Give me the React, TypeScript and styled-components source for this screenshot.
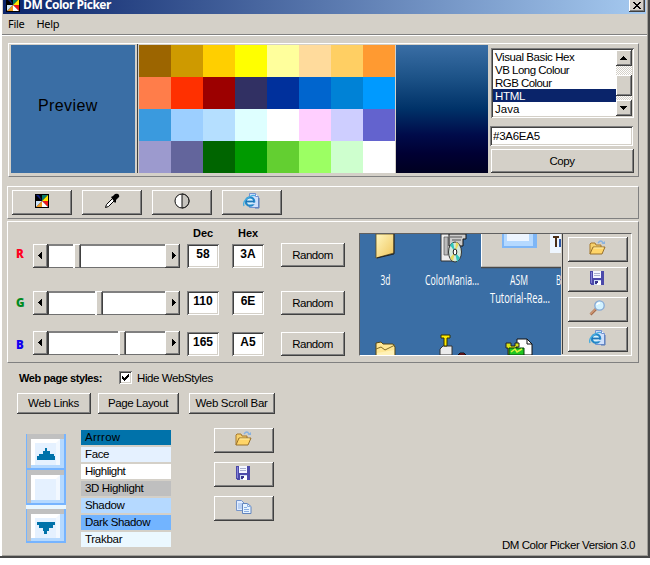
import React from "react";
import styled, { createGlobalStyle, css } from "styled-components";

const FACE = "#d4d0c8";

const GlobalStyle = createGlobalStyle`
  * { box-sizing: border-box; }
  body {
    margin: 0;
    background: #fff;
    font-family: "Liberation Sans", Arial, sans-serif;
    font-size: 11.5px;
    line-height: 13px;
    color: #000;
    overflow: hidden;
  }
`;

const raised = css`
  background: ${FACE};
  box-shadow: inset -1px -1px #404040, inset 1px 1px #fff, inset -2px -2px #808080;
`;

const sunken = css`
  background: #fff;
  box-shadow: inset 1px 1px #808080, inset -1px -1px #fff, inset 2px 2px #404040,
    inset -2px -2px ${FACE};
`;

const Window = styled.div`
  width: 650px;
  height: 558px;
  padding: 0 4px 0 3px;
  background: ${FACE};
  box-shadow: inset -2px -2px #484848, inset 2px 0 #fff, inset 1px 0 #d4d0c8, inset -3px -3px #a09e98;
`;

const TitleBar = styled.header`
  display: flex;
  height: 14px;
  padding: 0 1px 0 3px;
  background: linear-gradient(to right, #0a246a, #a6caf0);
  color: #fff;
`;

const TitleIcon = styled.span`
  display: block;
  height: 14px;
  margin: -2px 3px 0 0;
`;

const Title = styled.span`
  flex: 1;
  height: 14px;
  font: bold 12px/12px "Open Sans", "Noto Sans", sans-serif;
  letter-spacing: -0.5px;
  margin-top: -1px;
`;

const CloseButton = styled.button`
  ${raised}
  width: 16px;
  height: 14px;
  margin-top: -2px;
  border: 0;
  padding: 0;
  display: flex;
  align-items: center;
  justify-content: center;
`;

const MenuBar = styled.nav`
  display: flex;
  gap: 12px;
  height: 20px;
  padding: 2px 5px;
  font: 11px/15px "Noto Sans", sans-serif;
  letter-spacing: -0.3px;
`;

const Separator = styled.div`
  height: 2px;
  margin: 0 -1px;
  border-top: 1px solid #808080;
  border-bottom: 1px solid #fff;
`;

const Frame = styled.section<{ $h: number; $top: number; $left: number }>`
  display: flex;
  height: ${(p) => p.$h}px;
  margin: ${(p) => p.$top}px 7px 0 ${(p) => p.$left}px;
  border: 1px solid;
  border-color: #fff #808080 #808080 #fff;
`;

const Preview = styled.div`
  width: 124px;
  height: 128px;
  margin: 1px 2px 0;
  padding-left: 27px;
  background: #3a6ea5;
  font-size: 16px;
  line-height: 121px;
  letter-spacing: 0.4px;
`;

const Palette = styled.div`
  display: grid;
  grid-template-columns: repeat(8, 32px);
  grid-auto-rows: 32px;
  height: 129px;
  padding-top: 1px;
  padding-left: 1px;
  border-left: 1px solid #404040;
`;

const Swatch = styled.i<{ $c: string }>`
  background: ${(p) => p.$c};
`;

const Shades = styled.div`
  width: 92px;
  height: 128px;
  margin: 1px 2px 0 1px;
  background: linear-gradient(#3a6ea5 0%, #1d5388 25%, #003268 50%, #000b4a 70%, #000033 85%, #000020 100%);
`;

const Formats = styled.div`
  display: flex;
  flex-direction: column;
  width: 144px;
  padding-top: 4px;
`;

const ListBox = styled.div`
  ${sunken}
  display: flex;
  width: 143px;
  height: 70px;
  margin-left: 1px;
  padding: 2px;
`;

const Options = styled.ul`
  flex: 1;
  margin: 0;
  padding: 0;
  list-style: none;
`;

const Option = styled.li<{ $on?: boolean; $sp?: number }>`
  height: 13px;
  padding-left: 2px;
  line-height: 14px;
  white-space: nowrap;
  letter-spacing: ${(p) => p.$sp ?? 0}px;
  ${(p) => p.$on && "background: #0a246a; color: #fff;"}
`;

const VScroll = styled.div`
  width: 16px;
  height: 66px;
  background: repeating-conic-gradient(#fff 0 25%, #d4d0c8 0 50%) 0 0 / 2px 2px;
`;

const ScrollPart = styled.div<{ $h: number; $gap?: number }>`
  ${raised}
  display: flex;
  align-items: center;
  justify-content: center;
  height: ${(p) => p.$h}px;
  margin-top: ${(p) => p.$gap ?? 0}px;
`;

const CodeField = styled.input`
  ${sunken}
  width: 143px;
  height: 20px;
  margin-top: 8px;
  border: 0;
  padding: 0 3px;
  font: 11.5px "Liberation Sans", sans-serif;
  letter-spacing: -0.25px;
  outline: 0;
`;

const Button = styled.button<{ $w: number; $h?: number; $sp?: number }>`
  ${raised}
  display: flex;
  flex: none;
  align-items: center;
  justify-content: center;
  width: ${(p) => p.$w}px;
  height: ${(p) => p.$h ?? 25}px;
  border: 0;
  padding: 0 1px 0 0;
  font: 11.5px/13px "Liberation Sans", sans-serif;
  letter-spacing: ${(p) => p.$sp ?? -0.4}px;
  white-space: nowrap;
  color: #000;
`;

const CopyButton = styled(Button)`
  margin: 3px 0 0 1px;
`;

const IconButton = styled(Button)`
  padding-bottom: 3px;
`;

const ToolRow = styled.div`
  display: flex;
  gap: 10px;
  padding: 3px 4px;
`;

const Channels = styled.div`
  width: 351px;
  padding-top: 5px;
`;

const channelGrid = css`
  display: grid;
  grid-template-columns: 17px 154px 45px 49px 64px;
  padding-left: 8px;
`;

const Heads = styled.div`
  ${channelGrid}
  height: 16px;
  font-weight: bold;
  font-size: 11px;
  & > span { padding-left: 6px; }
`;

const ChannelRow = styled.div<{ $gap: number }>`
  ${channelGrid}
  height: 24px;
  margin-top: ${(p) => p.$gap}px;
`;

const ChannelName = styled.b<{ $c: string; $lh: number }>`
  height: 24px;
  color: ${(p) => p.$c};
  font: 800 11.5px/${(p) => p.$lh}px "Open Sans", sans-serif;
`;

const Slider = styled.div<{ $up: number }>`
  display: flex;
  width: 147px;
  height: 24px;
  margin-top: -${(p) => p.$up}px;
`;

const RandomButton = styled(Button)<{ $up: number }>`
  margin-top: -${(p) => p.$up}px;
`;

const SliderEnd = styled.div`
  ${raised}
  display: flex;
  align-items: center;
  justify-content: center;
  width: 15px;
`;

const Track = styled.div<{ $w: number }>`
  width: ${(p) => p.$w}px;
  background: #fff;
  border-top: 2px solid #808080;
  border-bottom: 1px solid #707070;
  border-left: 1px solid #404040;
`;

const Thumb = styled.div`
  width: 7px;
  background: ${FACE};
  box-shadow: inset 2px 1px #fff, inset -1px -1px #707070;
`;

const ValueBox = styled.div`
  ${sunken}
  width: 32px;
  height: 24px;
  text-align: center;
  font-weight: bold;
  font-size: 12px;
  line-height: 20px;
`;

const Capture = styled.div`
  display: flex;
  width: 273px;
  height: 123px;
  margin-top: 11px;
  border: 1px solid;
  border-color: #606060 #fff #fff #606060;
`;

const CaptureTools = styled.div`
  display: flex;
  flex-direction: column;
  gap: 5px;
  margin-left: 1px;
  padding: 3px 0 0 5px;
  height: 120px;
  border-left: 1px solid #404040;
`;

const StyleLine = styled.div`
  display: flex;
  align-items: center;
  height: 14px;
  margin: 8px 0 0 16px;
`;

const StyleTitle = styled.b`
  width: 100px;
  font-size: 11px;
  letter-spacing: -0.42px;
  white-space: nowrap;
`;

const CheckBox = styled.span`
  ${sunken}
  display: flex;
  align-items: center;
  justify-content: center;
  width: 13px;
  height: 13px;
  margin: -1px 5px 0 0;
`;

const CheckLabel = styled.span`
  letter-spacing: -0.42px;
`;

const StyleButtons = styled.div`
  display: flex;
  margin: 8px 0 0 14px;
  & > :nth-child(2) { margin: 0 10px 0 7px; }
`;

const Lower = styled.div`
  display: flex;
  height: 121px;
  padding-left: 23px;
  margin-top: 14px;
`;

const DemoScroll = styled.div`
  width: 40px;
  height: 109px;
  margin-top: 6px;
  background: #e8f6ff;
`;

const DemoPart = styled.div<{ $h: number; $gap?: number }>`
  height: ${(p) => p.$h}px;
  margin-top: ${(p) => p.$gap ?? 0}px;
  border: solid #76b4ff;
  border-width: 0 2px 2px 1px;
  padding: 5px 4px 3px;
  background: linear-gradient(#c0c0c0, #c0c0c0) 0 0 / 100% 5px no-repeat,
    linear-gradient(to right, #c0c0c0 4px, #b5d9ff 4px);
`;

const DemoFace = styled.div`
  display: flex;
  align-items: center;
  justify-content: center;
  height: 100%;
  background: #e5f1ff;
  border: 4px solid #fff;
  border-right-color: #f2f8ff;
  border-bottom-width: 0;
`;

const StyleList = styled.div`
  display: flex;
  flex-direction: column;
  gap: 2px;
  width: 90px;
  margin: 2px 43px 0 15px;
`;

const StyleItem = styled.div<{ $c: string; $sp?: number }>`
  height: 15px;
  padding-left: 4px;
  background: ${(p) => p.$c};
  line-height: 15px;
  letter-spacing: ${(p) => p.$sp ?? -0.36}px;
`;

const FileTools = styled.div`
  display: flex;
  flex-direction: column;
  gap: 9px;
`;

const Version = styled.footer`
  margin: -10px 11px 0 0;
  text-align: right;
  letter-spacing: -0.42px;
`;

const Mark = styled.svg`
  display: block;
`;

const Pinwheel = () => (
  <Mark width="14" height="14" viewBox="0 0 14 14">
    <rect width="14" height="14" fill="#000" />
    <path d="M1 1h6v6z" fill="#0a1c80" />
    <path d="M7 1h6L7 7z" fill="#087a68" />
    <path d="M13 1v6H7z" fill="#ffe600" />
    <path d="M13 7v6L7 7z" fill="#f01818" />
    <path d="M7 7l6 6H7z" fill="#fff" />
    <path d="M7 7v6H1z" fill="#f09a20" />
    <path d="M1 7h6l-6 6z" fill="#cde4f7" />
    <path d="M7 1v6l-3-6z" fill="#000" />
  </Mark>
);

const Dropper = () => (
  <svg width="16" height="16" viewBox="0 0 16 16">
    <path d="M1.500 14.500l1-3 6-6 2 2-6 6z" fill="#fff" stroke="#000" />
    <path d="M7 4l2-1 2-2q3-1 4 1t-1 3l-2 2v2l-1 1z" fill="#000" />
  </svg>
);

const Contrast = () => (
  <svg width="16" height="16" viewBox="0 0 16 16">
    <circle cx="8" cy="8" r="7" fill="#fff" stroke="#111" />
    <path d="M8 1a7 7 0 0 1 0 14z" fill="#c6c4be" stroke="#111" />
  </svg>
);

const WebPage = () => (
  <svg width="17" height="16" viewBox="0 0 17 16">
    <path d="M6.500 .5h6l3 3v11h-9z" fill="#cfe0fb" stroke="#7392cf" />
    <path d="M12.500 .5v3h3" fill="#fff" stroke="#7392cf" />
    <path d="M12 15h4V5" fill="none" stroke="#5578b8" />
    <circle cx="7" cy="8.500" r="4.200" fill="#d9f2fc" stroke="#2487c7" strokeWidth="2.200" />
    <path d="M3 8.500h8" stroke="#1d75b8" strokeWidth="1.800" />
    <path d="M8.500 10.500h3.500" stroke="#cfe0fb" strokeWidth="1.600" />
    <path d="M1 13Q-1 8 7 3.500 11 1.500 12 3" fill="none" stroke="#48aee0" strokeWidth="1.300" />
  </svg>
);

const Folder = () => (
  <svg width="17" height="16" viewBox="0 0 17 16">
    <path d="M1 14V4l1-1h4l1 2h5v3" fill="#f6d16c" stroke="#a7782b" />
    <path d="M1 14l3-7h12l-3 7z" fill="#ffd568" stroke="#98702c" />
    <path d="M4.700 8h9.800" stroke="#fff0aa" />
    <path d="M9 3q3-4 5 0" fill="none" stroke="#87b2e1" strokeWidth="1.300" />
    <path d="M12.500 4H16V1z" fill="#87b2e1" />
  </svg>
);

const Disk = () => (
  <svg width="15" height="14" viewBox="0 0 15 14" shapeRendering="crispEdges">
    <path d="M0 0h14v14H1l-1-1z" fill="#4b49aa" />
    <path d="M1 1h1v11H1z" fill="#8583d6" />
    <path d="M3 0h8v7H3z" fill="#f4f6ff" />
    <path d="M4 2h6v1H4zM4 4h6v1H4z" fill="#a9b0ce" />
    <path d="M4 9h7v5H4z" fill="#cfdef5" />
    <path d="M5 10h3v3H5z" fill="#37358c" />
    <path d="M8 10h3v4H7z" fill="#fff" />
  </svg>
);

const Magnifier = () => (
  <svg width="17" height="16" viewBox="0 0 17 16">
    <path d="M1.500 14.500L7 9" stroke="#a66c4c" strokeWidth="2.600" />
    <path d="M1.500 14L6.500 9" stroke="#edb68e" />
    <circle cx="10.500" cy="5.500" r="4.700" fill="#d2f2ff" stroke="#86a9d4" strokeWidth="1.300" />
    <path d="M8 5q0-2 3-2" stroke="#fff" fill="none" strokeWidth="1.500" />
  </svg>
);

const Pages = () => (
  <svg width="16" height="14" viewBox="0 0 16 14">
    <path d="M.5.5h5l3 3v7h-8z" fill="#e0ecff" stroke="#7595cb" />
    <path d="M2 4h4M2 6h4M2 8h4" stroke="#93b5e7" />
    <path d="M6.500 3.500h5l3.500 3v7H6.500z" fill="#e6f4ff" stroke="#6284bd" />
    <path d="M11.500 3.500v3H15M8 7.500h3M8 9.500h5M8 11.500h5" stroke="#8aade2" fill="none" />
  </svg>
);

const Triangle = ({ d }: { d: string }) => (
  <svg width="8" height="8" viewBox="0 0 8 8" shapeRendering="crispEdges">
    <path d={d} fill="#000" />
  </svg>
);

const UP = "M3 2h1v1h1v1h1v1h1v1H0V5h1V4h1V3h1z";
const DOWN = "M0 2h7v1H6v1H5v1H4v1H3V5H2V4H1V3H0z";
const LEFT = "M5 0v7H4V6H3V5H2V4H1V3h1V2h1V1h1V0z";
const RIGHT = "M3 0v7h1V6h1V5h1V4h1V3H6V2H5V1H4V0z";

const DemoArrow = ({ down }: { down?: boolean }) => (
  <svg width="18" height="12" viewBox="0 0 18 12" shapeRendering="crispEdges">
    <path
      fill="#0072aa"
      d={down ? "M0 0h18v3h-2v3h-4v3h-2v3H7V9H6V6H2V3H0z" : "M8 0h2v3h3v3h4v2h1v4H0V8h2V6h4V3h2z"}
    />
  </svg>
);

const DesktopThumb = () => (
  <svg width="201" height="121" viewBox="0 0 201 121">
    <defs>
      <linearGradient id="fold" x1="0" x2="1" y1="0" y2="1">
        <stop offset="0" stopColor="#fff7c0" />
        <stop offset="1" stopColor="#efc45a" />
      </linearGradient>
    </defs>
    <rect width="201" height="121" fill="#3a6ea5" />
    <path d="M16 0h18v19L16 24z" fill="url(#fold)" stroke="#5d4b17" strokeWidth=".8" />
    <path d="M34 0v20l-17 4" fill="none" stroke="#222" />
    <path d="M81 0h12v27H81z" fill="#eee" stroke="#333" />
    <path d="M84 3h4v18h-4z" fill="#bbb" stroke="#555" strokeWidth=".7" />
    <path d="M89 0h17v5h-3v7H89z" fill="#ccc" stroke="#111" />
    <path d="M90 3h12M92 6h9" stroke="#555" />
    <ellipse cx="95" cy="18" rx="6.500" ry="10" fill="#d5e8dc" stroke="#333" />
    <path d="M95 18l-5-7 3-3zM95 18l5 6-3 4z" fill="#2fc6bd" />
    <path d="M95 18l1-10 3 2zM95 18l-2 9-3-3z" fill="#e6da5b" />
    <ellipse cx="95" cy="18" rx="1.800" ry="3" fill="#fff" stroke="#222" />
    <path d="M121 0h80v34h-80z" fill={FACE} />
    <path d="M121.500 33V0" stroke="#fff" />
    <path d="M121 33.500h80" stroke="#494949" strokeWidth="1.500" />
    <path d="M142 0h35v14h-35z" fill="#7eb6f6" />
    <path d="M144 0h29v12h-29z" fill="#b5d9ff" />
    <path d="M147 0h22v7h-22z" fill="#edf5ff" />
    <path d="M190 0h11v19h-11z" fill="#eef6ff" />
    <path d="M193 3h6M196 3v10" stroke="#4a2d16" strokeWidth="2" />
    <path d="M200 5v8" stroke="#2e57a5" strokeWidth="2" />
    <path d="M16 121v-12l5-1 2 2h10l2 3v8" fill="#ffe795" stroke="#544719" />
    <path d="M16 115l5-2 4 3 10-5" fill="none" stroke="#806b25" />
    <path d="M17 119l17-3v5H17z" fill="#fff1b6" />
    <path d="M80 121v-6l3-3h9v9z" fill="#ececec" stroke="#333" />
    <path d="M81 101h9v3h-3v8h-3v-8h-3z" fill="#ffed00" stroke="#353000" />
    <path d="M98 121l2-2h4l2 2z" fill="#a01422" stroke="#111" />
    <path d="M157 105h10l5 5v11h-15z" fill="#fff" stroke="#111" />
    <path d="M167 105v5h5" fill="none" stroke="#111" />
    <path d="M146 109h5v3h4v-3h4v4h-3v8h-8v-7h-2z" fill="#d9e516" stroke="#222" />
    <path d="M149 114h15v7h-15z" fill="#1fc521" stroke="#083808" />
    <path d="M151 118l4-3 2 3 5-3" fill="none" stroke="#d8f43c" strokeWidth="1.500" />
    <g fill="#fff" fontFamily="Open Sans, sans-serif" fontSize="14">
      <text x="20.500" y="50.500" textLength="10" lengthAdjust="spacingAndGlyphs">3d</text>
      <text x="65" y="50.500" textLength="54" lengthAdjust="spacingAndGlyphs">ColorMania...</text>
      <text x="150" y="50.500" textLength="18" lengthAdjust="spacingAndGlyphs">ASM</text>
      <text x="196" y="50.500" textLength="5" lengthAdjust="spacingAndGlyphs">B</text>
      <text x="130" y="69" textLength="60" lengthAdjust="spacingAndGlyphs">Tutorial-Rea...</text>
    </g>
  </svg>
);

const COLORS = [
  "#9c6500", "#ce9a00", "#ffcf00", "#ffff00", "#ffff9c", "#ffdb9c", "#ffcf63", "#ff9a31",
  "#ff7d4a", "#ff3000", "#9c0000", "#313063", "#00309c", "#0065ce", "#0082d6", "#009aff",
  "#3a9ade", "#9ccfff", "#b5dfff", "#deffff", "#ffffff", "#ffcfff", "#ceceff", "#6363ce",
  "#9c9ace", "#63659c", "#006500", "#009a00", "#63cf31", "#9cff63", "#ceffce", "#ffffff",
];

const CHANNELS = [
  { name: "R", color: "#ff0020", dec: "58", hex: "3A", pos: 25, gap: 1, line: 20, sliderUp: 0, buttonUp: 1 },
  { name: "G", color: "#008a20", dec: "110", hex: "6E", pos: 47, gap: 23, line: 24, sliderUp: 0, buttonUp: 0 },
  { name: "B", color: "#1000f0", dec: "165", hex: "A5", pos: 70, gap: 17, line: 26, sliderUp: 1, buttonUp: 0 },
];

export default function App() {
  return (
    <>
      <GlobalStyle />
      <Window>
        <TitleBar>
          <TitleIcon><Pinwheel /></TitleIcon>
          <Title>DM Color Picker</Title>
          <CloseButton aria-label="Close">
            <svg width="8" height="7" viewBox="0 0 8 7" shapeRendering="crispEdges">
              <path d="M0 0h2v1h1v1h2V1h1V0h2v1H7v1H6v1H5v1h1v1h1v1h1v1H6V6H5V5H3v1H2v1H0V6h1V5h1V4h1V3H2V2H1V1H0z" />
            </svg>
          </CloseButton>
        </TitleBar>
        <MenuBar>
          <span>File</span>
          <span>Help</span>
        </MenuBar>
        <Separator />

        <Frame $h={134} $top={7} $left={5}>
          <Preview>Preview</Preview>
          <Palette>
            {COLORS.map((c, i) => <Swatch key={i} $c={c} />)}
          </Palette>
          <Shades />
          <Formats>
            <ListBox>
              <Options>
                <Option $sp={-0.42}>Visual Basic Hex</Option>
                <Option $sp={-0.5}>VB Long Colour</Option>
                <Option $sp={-0.55}>RGB Colour</Option>
                <Option $sp={-0.3} $on>HTML</Option>
                <Option>Java</Option>
              </Options>
              <VScroll>
                <ScrollPart $h={16}><Triangle d={UP} /></ScrollPart>
                <ScrollPart $h={21} $gap={9} />
                <ScrollPart $h={16} $gap={4}><Triangle d={DOWN} /></ScrollPart>
              </VScroll>
            </ListBox>
            <CodeField defaultValue="#3A6EA5" />
            <CopyButton $w={143} $h={24}>Copy</CopyButton>
          </Formats>
        </Frame>

        <Frame $h={33} $top={9} $left={4}>
          <ToolRow>
            <IconButton $w={60}><Pinwheel /></IconButton>
            <IconButton $w={60}><Dropper /></IconButton>
            <IconButton $w={60}><Contrast /></IconButton>
            <IconButton $w={60}><WebPage /></IconButton>
          </ToolRow>
        </Frame>

        <Frame $h={142} $top={2} $left={4}>
          <Channels>
            <Heads>
              <i /><i />
              <span>Dec</span>
              <span>Hex</span>
            </Heads>
            {CHANNELS.map((c) => (
              <ChannelRow key={c.name} $gap={c.gap}>
                <ChannelName $c={c.color} $lh={c.line}>{c.name}</ChannelName>
                <Slider $up={c.sliderUp}>
                  <SliderEnd><Triangle d={LEFT} /></SliderEnd>
                  <Track $w={c.pos} />
                  <Thumb />
                  <Track $w={110 - c.pos} />
                  <SliderEnd><Triangle d={RIGHT} /></SliderEnd>
                </Slider>
                <ValueBox>{c.dec}</ValueBox>
                <ValueBox>{c.hex}</ValueBox>
                <RandomButton $w={64} $h={24} $sp={-0.5} $up={c.buttonUp}>Random</RandomButton>
              </ChannelRow>
            ))}
          </Channels>
          <Capture>
            <DesktopThumb />
            <CaptureTools>
              <IconButton $w={60}><Folder /></IconButton>
              <IconButton $w={60}><Disk /></IconButton>
              <IconButton $w={60}><Magnifier /></IconButton>
              <IconButton $w={60}><WebPage /></IconButton>
            </CaptureTools>
          </Capture>
        </Frame>

        <StyleLine>
          <StyleTitle>Web page styles:</StyleTitle>
          <CheckBox>
            <svg width="7" height="7" viewBox="0 0 7 7" shapeRendering="crispEdges">
              <path d="M0 2h1v1h1v1h1V3h1V2h1V1h1V0h1v3H6v1H5v1H4v1H3v1H2V6H1V5H0z" />
            </svg>
          </CheckBox>
          <CheckLabel>Hide WebStyles</CheckLabel>
        </StyleLine>
        <StyleButtons>
          <Button $w={74} $h={21} $sp={-0.28}>Web Links</Button>
          <Button $w={81} $h={21}>Page Layout</Button>
          <Button $w={86} $h={21} $sp={-0.32}>Web Scroll Bar</Button>
        </StyleButtons>

        <Lower>
          <DemoScroll>
            <DemoPart $h={36}><DemoFace><DemoArrow /></DemoFace></DemoPart>
            <DemoPart $h={35}><DemoFace /></DemoPart>
            <DemoPart $h={34} $gap={4}><DemoFace><DemoArrow down /></DemoFace></DemoPart>
          </DemoScroll>
          <StyleList>
            <StyleItem $c="#0072aa" $sp={0.25}>Arrrow</StyleItem>
            <StyleItem $c="#e5f1ff">Face</StyleItem>
            <StyleItem $c="#ffffff" $sp={-0.5}>Highlight</StyleItem>
            <StyleItem $c="#bfbfbf">3D Highlight</StyleItem>
            <StyleItem $c="#b5d9ff">Shadow</StyleItem>
            <StyleItem $c="#72b4ff">Dark Shadow</StyleItem>
            <StyleItem $c="#ebf8ff" $sp={-0.28}>Trakbar</StyleItem>
          </StyleList>
          <FileTools>
            <IconButton $w={60}><Folder /></IconButton>
            <IconButton $w={60}><Disk /></IconButton>
            <IconButton $w={60}><Pages /></IconButton>
          </FileTools>
        </Lower>
        <Version>DM Color Picker Version 3.0</Version>
      </Window>
    </>
  );
}
